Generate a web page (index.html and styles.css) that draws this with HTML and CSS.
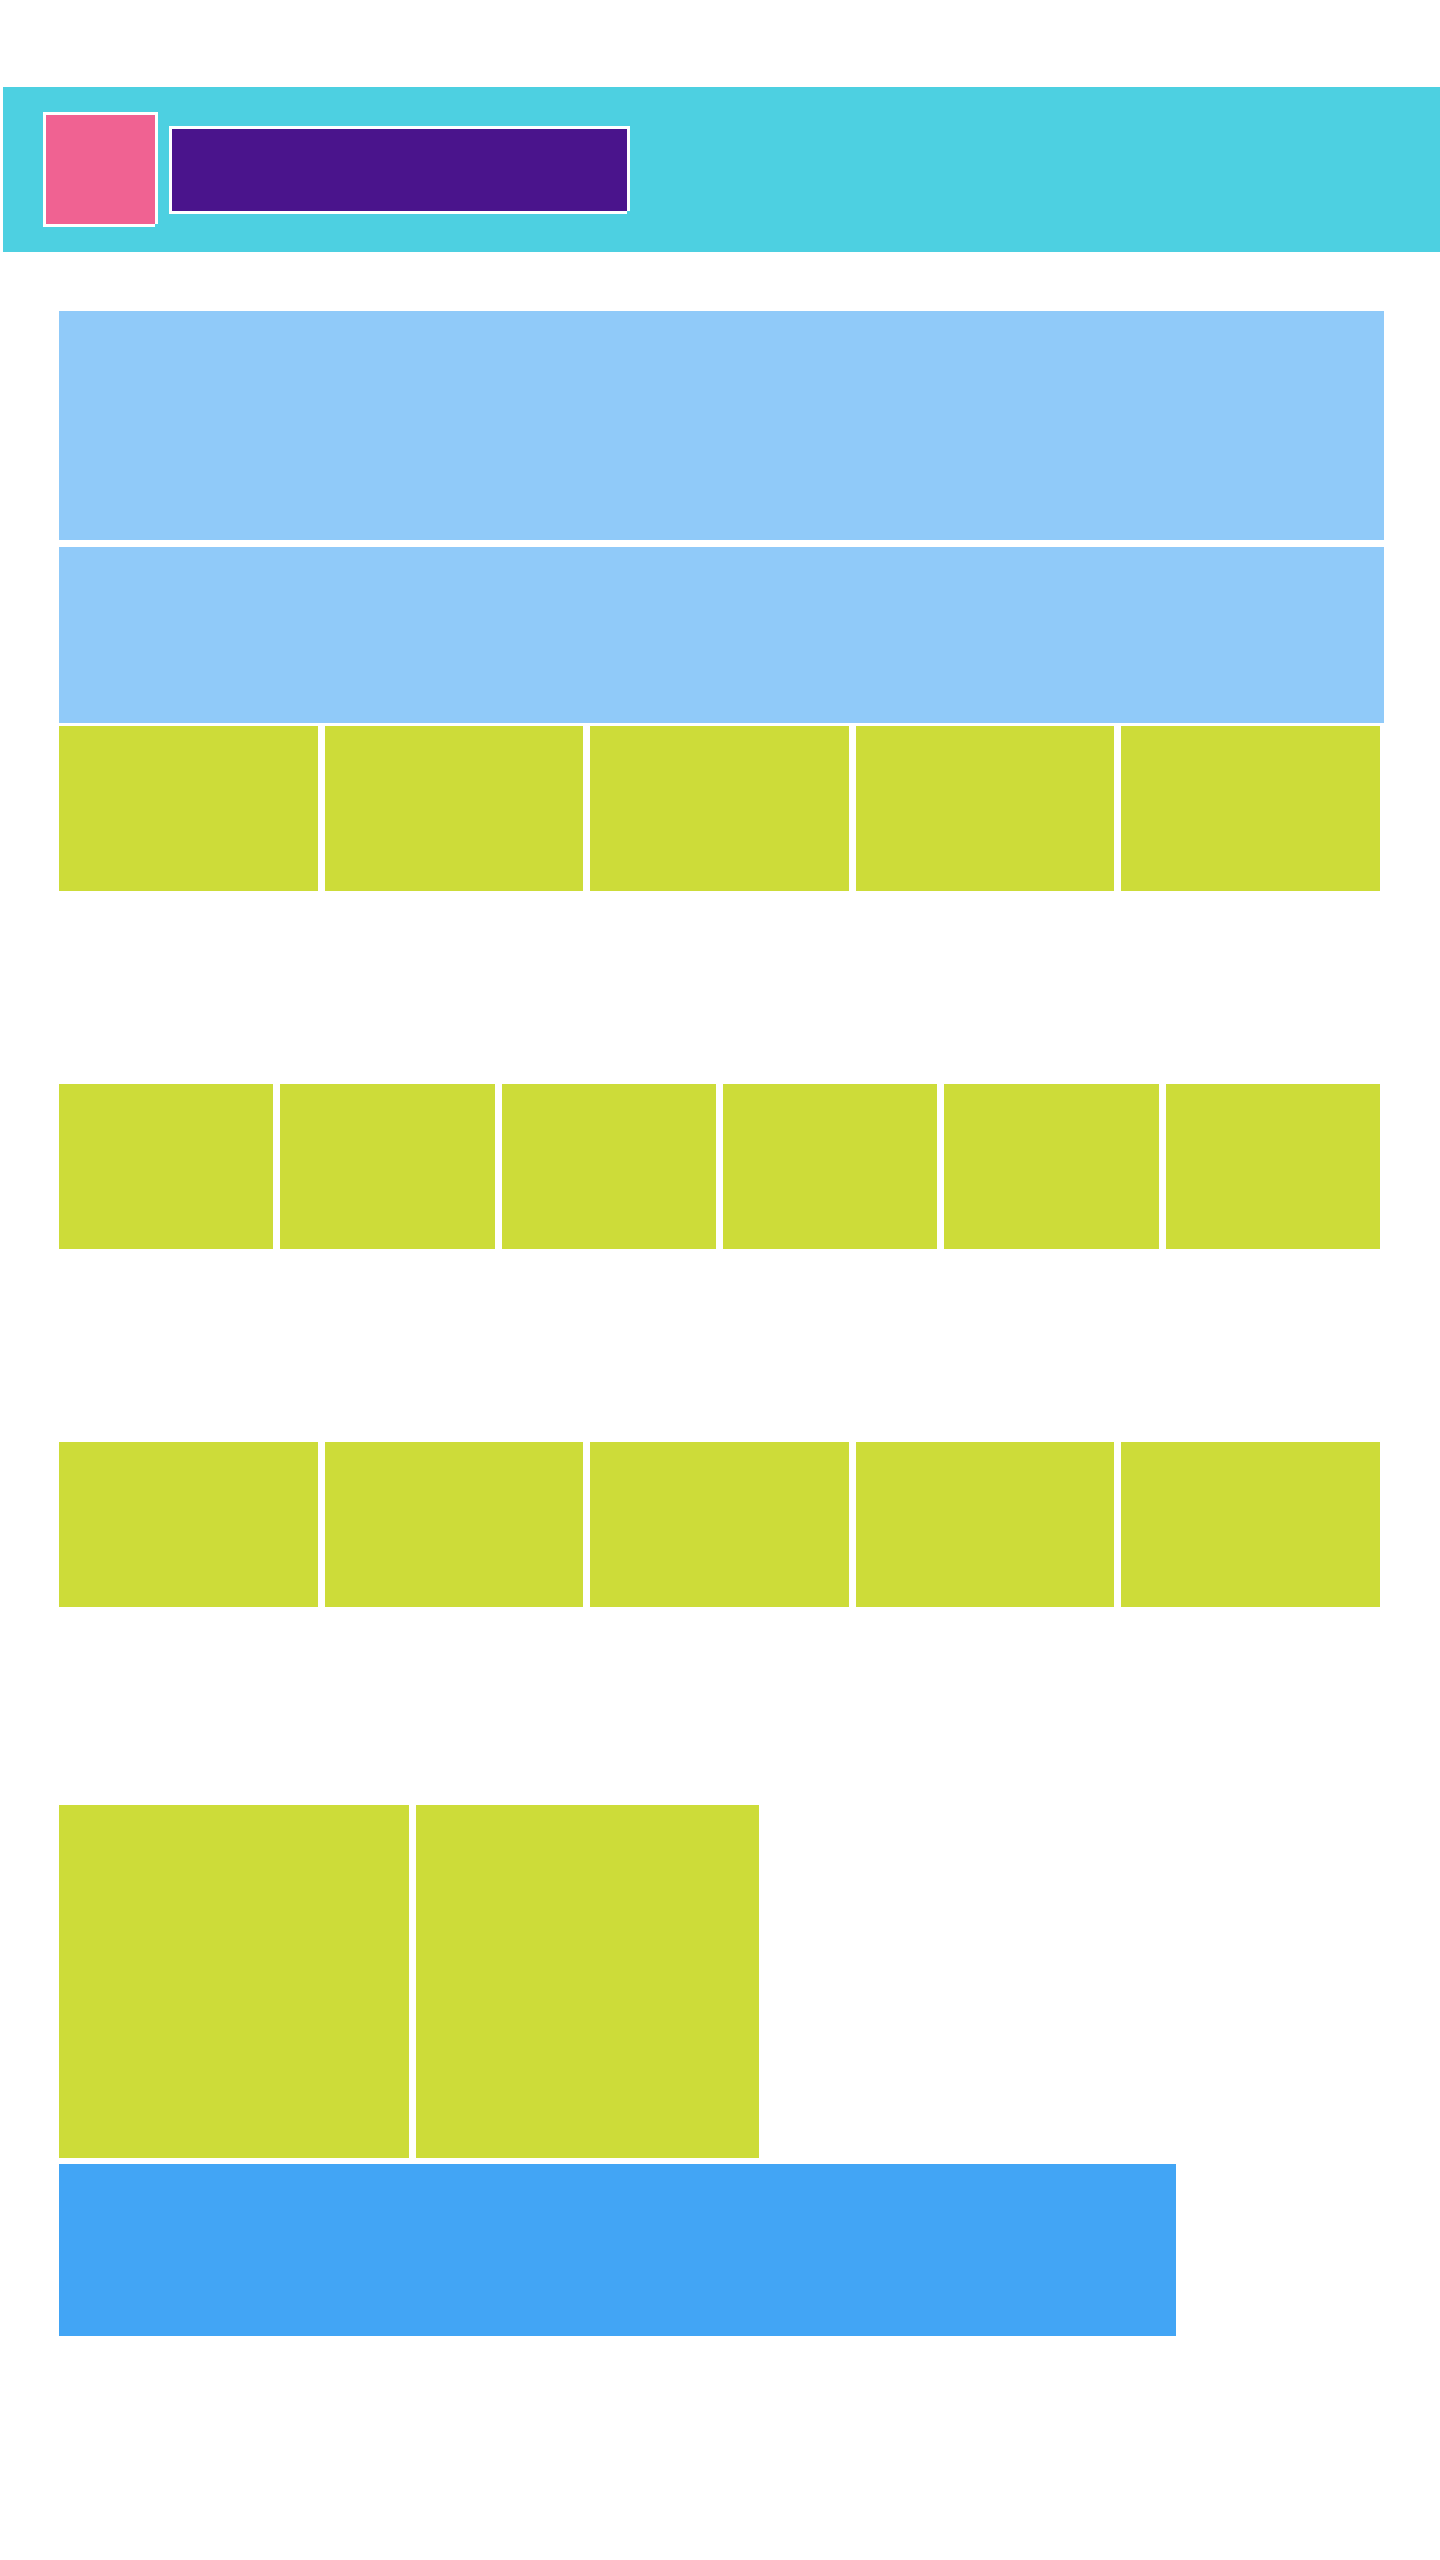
FILE: index.html
```html
<!DOCTYPE html>
<html lang="en">
<head>
    <meta charset="UTF-8">
    <meta name="viewport" content="width=device-width, initial-scale=1.0">
    <title>Layout</title>
    <link rel="stylesheet" href="styles.css">
</head>
<body>
    <!-- Barre du haut -->
    <header class="topbar">
        <div class="logo"></div>
        <div class="title-block"></div>
    </header>

    <main class="content">
        <div class="hero"></div>
        <div class="banner"></div>

        <div class="tiles">
            <div class="tile"></div>
            <div class="tile"></div>
            <div class="tile"></div>
            <div class="tile"></div>
            <div class="tile"></div>
        </div>

        <div class="tiles spaced">
            <div class="tile"></div>
            <div class="tile"></div>
            <div class="tile"></div>
            <div class="tile"></div>
            <div class="tile"></div>
            <div class="tile"></div>
        </div>

        <div class="tiles spaced">
            <div class="tile"></div>
            <div class="tile"></div>
            <div class="tile"></div>
            <div class="tile"></div>
            <div class="tile"></div>
        </div>

        <div class="cards">
            <div class="card"></div>
            <div class="card narrow"></div>
        </div>
        <div class="footer-block"></div>
    </main>
</body>
</html>
```

FILE: styles.css
```css
body {
    margin: 0;
    background-color: #fff;
    font-family: "Liberation Sans", Arial, sans-serif;
}
.topbar {
    margin: 87px 0 0 3px;
    height: 165px;
    padding-left: 40px;
    display: flex;
    align-items: center;
    background-color: #4dd0e1;
}
.logo {
    width: 112px;
    height: 112px;
    margin: 0 14px 3px 0;
    box-sizing: border-box;
    border-left: 3px solid #fff;
    border-top: 3px solid #fff;
    box-shadow: 3px 0 0 #fff, 0 3px 0 #fff;
    background-color: #f06292;
}
.title-block {
    width: 458px;
    height: 85px;
    margin-bottom: 3px;
    box-sizing: border-box;
    border-left: 3px solid #fff;
    border-top: 3px solid #fff;
    box-shadow: 3px 0 0 #fff, 0 3px 0 #fff;
    background-color: #4a148c;
}
.content {
    margin-top: 59px;
    padding-left: 59px;
}
.hero {
    width: 1325px;
    height: 229px;
    margin-bottom: 7px;
    background-color: #90caf9;
}
.banner {
    width: 1325px;
    height: 176px;
    margin-bottom: 3px;
    background-color: #90caf9;
}
.tiles {
    display: flex;
    width: 1328px;
    height: 165px;
}
.tiles.spaced {
    margin-top: 193px;
}
.tile {
    flex: 1;
    margin-right: 7px;
    background-color: #cddc39;
}
.cards {
    display: flex;
    gap: 7px;
    margin-top: 198px;
}
.card {
    width: 350px;
    height: 353px;
    background-color: #cddc39;
}
.card.narrow {
    width: 343px;
}
.footer-block {
    width: 1117px;
    height: 172px;
    margin-top: 6px;
    background-color: #42a5f5;
}
```
